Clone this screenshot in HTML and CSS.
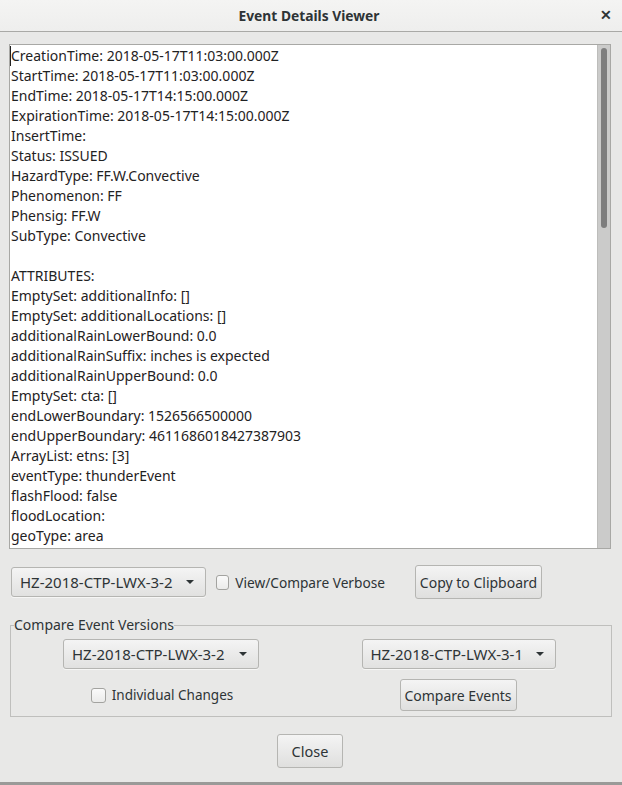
FILE: index.html
```html
<!DOCTYPE html>
<html>
<head>
    <title>Event Details Viewer</title>
    <link rel="stylesheet" href="styles.css">
</head>
<body>
    <div class="window">
        <div class="titlebar">
            <span class="title">Event Details Viewer</span>
            <span class="close-x">&#x2715;</span>
        </div>

        <div class="viewer">
            <div class="details">
<div class="line first">CreationTime: 2018-05-17T11:03:00.000Z</div>
<div class="line">StartTime: 2018-05-17T11:03:00.000Z</div>
<div class="line">EndTime: 2018-05-17T14:15:00.000Z</div>
<div class="line">ExpirationTime: 2018-05-17T14:15:00.000Z</div>
<div class="line">InsertTime:</div>
<div class="line">Status: ISSUED</div>
<div class="line">HazardType: FF.W.Convective</div>
<div class="line">Phenomenon: FF</div>
<div class="line">Phensig: FF.W</div>
<div class="line">SubType: Convective</div>
<div class="line">&nbsp;</div>
<div class="line">ATTRIBUTES:</div>
<div class="line">EmptySet: additionalInfo: []</div>
<div class="line">EmptySet: additionalLocations: []</div>
<div class="line">additionalRainLowerBound: 0.0</div>
<div class="line">additionalRainSuffix: inches is expected</div>
<div class="line">additionalRainUpperBound: 0.0</div>
<div class="line">EmptySet: cta: []</div>
<div class="line">endLowerBoundary: 1526566500000</div>
<div class="line">endUpperBoundary: 4611686018427387903</div>
<div class="line">ArrayList: etns: [3]</div>
<div class="line">eventType: thunderEvent</div>
<div class="line">flashFlood: false</div>
<div class="line">floodLocation:</div>
<div class="line">geoType: area</div>
            </div>
            <div class="scrollbar">
                <div class="thumb"></div>
            </div>
        </div>

        <div class="toolbar">
            <div class="combo combo-main">
                <span>HZ-2018-CTP-LWX-3-2</span>
                <span class="arrow"></span>
            </div>
            <label class="check check-verbose">
                <span class="box"></span>
                <span>View/Compare Verbose</span>
            </label>
            <button class="btn btn-copy">Copy to Clipboard</button>
        </div>

        <fieldset class="compare">
            <legend>Compare Event Versions</legend>
            <div class="compare-grid">
                <div class="combo combo-left">
                    <span>HZ-2018-CTP-LWX-3-2</span>
                    <span class="arrow"></span>
                </div>
                <div class="combo combo-right">
                    <span>HZ-2018-CTP-LWX-3-1</span>
                    <span class="arrow"></span>
                </div>
                <label class="check check-changes">
                    <span class="box"></span>
                    <span>Individual Changes</span>
                </label>
                <button class="btn btn-compare">Compare Events</button>
            </div>
        </fieldset>

        <div class="footer">
            <button class="btn btn-close">Close</button>
        </div>
    </div>
</body>
</html>
```

FILE: styles.css
```css
html, body {
    margin: 0;
    padding: 0;
}
body {
    background-color: #e8e8e7;
    font-family: "Noto Sans", sans-serif;
    font-size: 14px;
    color: #2e3436;
}
.window {
    width: 622px;
    height: 785px;
    box-sizing: border-box;
    border-bottom: 3px solid #9a9a98;
}
.titlebar {
    height: 31px;
    border-bottom: 1px solid #a9a9a6;
    background: linear-gradient(#f4f4f3, #eeeeed);
    display: flex;
    align-items: center;
    justify-content: center;
    position: relative;
}
.title {
    font-weight: bold;
    font-size: 13.8px;
    padding-right: 4px;
}
.close-x {
    position: absolute;
    right: 10px;
    top: 6px;
    font-size: 13.5px;
    font-weight: bold;
}
.viewer {
    margin: 12px 11px 0 9px;
    height: 505px;
    border: 1px solid #a8a8a5;
    display: flex;
    box-sizing: border-box;
}
.details {
    flex: 1;
    background-color: #ffffff;
    padding: 1px 0 0 1px;
    color: #1f2223;
    overflow: hidden;
}
.line {
    height: 20px;
    line-height: 20px;
    white-space: pre;
}
.first {
    border-left: 1px solid #222;
    margin-left: -1px;
}
.scrollbar {
    width: 13px;
    background-color: #cbcbca;
    border-left: 1px solid #bdbdbb;
    padding: 3px 3px;
    box-sizing: border-box;
}
.thumb {
    height: 180px;
    background-color: #7e7e7e;
    border-radius: 3px;
}
.toolbar {
    display: flex;
    align-items: center;
    margin: 16px 0 0 11px;
    height: 34px;
}
.combo {
    height: 30px;
    box-sizing: border-box;
    border: 1px solid #b5b5b2;
    border-radius: 3px;
    background: linear-gradient(#f4f4f4, #e1e1e0);
    display: flex;
    align-items: center;
    justify-content: space-between;
    padding: 0 11px 0 8px;
    font-size: 15px;
    white-space: nowrap;
    box-shadow: 0 1px 0 rgba(255, 255, 255, 0.6);
}
.combo-main {
    width: 195px;
}
.arrow {
    width: 0;
    height: 0;
    border-left: 4px solid transparent;
    border-right: 4px solid transparent;
    border-top: 4px solid #2e3436;
}
.check {
    display: flex;
    align-items: center;
    font-size: 13.7px;
    white-space: nowrap;
}
.box {
    width: 15px;
    height: 15px;
    box-sizing: border-box;
    border: 1px solid #a3a3a0;
    border-radius: 3px;
    background: linear-gradient(#fafafa, #ebebea);
    margin-right: 6px;
}
.check-verbose {
    margin-left: 10px;
    width: 169px;
}
.btn {
    font-family: "Noto Sans", sans-serif;
    font-size: 14px;
    color: #2e3436;
    border: 1px solid #b5b5b2;
    border-radius: 3px;
    background: linear-gradient(#f4f4f4, #dfdfde);
    padding: 0;
    box-sizing: border-box;
    white-space: nowrap;
}
.btn-copy {
    margin-left: 30px;
    width: 127px;
    height: 34px;
}
.compare {
    margin: 18px 12px 0 10px;
    padding: 0;
    border: 1px solid #bfbfbd;
    height: 100px;
    box-sizing: border-box;
}
.compare legend {
    padding: 0;
    margin-left: 3px;
    font-size: 14px;
    line-height: 16px;
}
.compare-grid {
    display: grid;
    grid-template-columns: 300px 300px;
    justify-items: center;
    align-items: center;
    row-gap: 10px;
    margin-top: 6px;
}
.combo-left {
    width: 196px;
}
.combo-right {
    width: 194px;
    margin-left: -5px;
}
.check-changes {
    margin-left: 2px;
    font-size: 13.5px;
}
.btn-compare {
    width: 117px;
    height: 32px;
    margin-left: -6px;
}
.footer {
    display: flex;
    justify-content: center;
    margin-top: 17px;
}
.btn-close {
    width: 66px;
    height: 34px;
    margin-left: -2px;
    font-size: 14.5px;
}
```
